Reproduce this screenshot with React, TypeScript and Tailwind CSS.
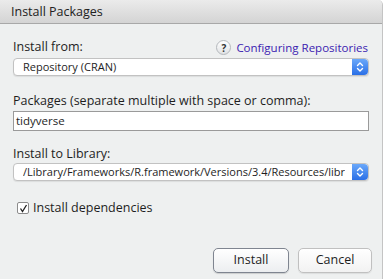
export default function App() {
  const font = { fontFamily: '"Open Sans", "DejaVu Sans", sans-serif' };

  const Stepper = () => (
    <div className="w-[16px] h-full rounded-r-[4px] bg-gradient-to-b from-[#6aa8fa] to-[#2a6fe6] flex items-center justify-center">
      <svg width="8" height="12" viewBox="0 0 8 12" fill="none" stroke="white" strokeWidth="1.4" strokeLinecap="round" strokeLinejoin="round">
        <path d="M1.5 4.5 L4 2 L6.5 4.5" />
        <path d="M1.5 7.5 L4 10 L6.5 7.5" />
      </svg>
    </div>
  );

  return (
    <div className="w-[385px] h-[279px] bg-white overflow-hidden" style={font}>
      <div className="w-[383px] h-[279px] bg-[#eef0f0] border-r border-[#c4c4c4] rounded-tr-[5px] overflow-hidden text-[12.5px] text-[#1e1e1e]">
        {/* Title bar */}
        <div className="h-[24px] bg-gradient-to-b from-[#ebebeb] to-[#d4d4d4] border-b border-[#a8a8a8] pl-[11px] pt-[4px] leading-[15px] text-[12.5px] text-[#222]">
          Install Packages
        </div>

        <div className="pl-[13px] w-[369px]">
          {/* Install from */}
          <div className="mt-[15px] h-[17px] flex items-center justify-between">
            <span>Install from:</span>
            <span className="flex items-center gap-[5px] mr-[1px]">
              <span className="w-[15px] h-[15px] rounded-full border border-[#b4b8bc] bg-gradient-to-b from-white to-[#e0e2e4] flex items-center justify-center text-[10px] font-bold text-[#333] leading-none">?</span>
              <span className="text-[#3b22b0] text-[11.5px]">Configuring Repositories</span>
            </span>
          </div>
          <div className="mt-[2px] h-[18px] flex rounded-[4px] border border-[#c2c2c2] bg-white shadow-[0_1px_1px_rgba(0,0,0,0.08)]">
            <div className="flex-1 pl-[9px] leading-[16px] text-[11px]">Repository (CRAN)</div>
            <Stepper />
          </div>

          {/* Packages */}
          <div className="mt-[16px] h-[17px] leading-[17px]">Packages (separate multiple with space or comma):</div>
          <div className="mt-[2px] h-[20px] border border-[#9a9a9a] bg-white pl-[2px] leading-[18px] text-[11.5px]">tidyverse</div>

          {/* Install to Library */}
          <div className="mt-[14px] h-[17px] leading-[17px]">Install to Library:</div>
          <div className="mt-[1px] h-[18px] flex rounded-[4px] border border-[#c2c2c2] bg-white shadow-[0_1px_1px_rgba(0,0,0,0.08)]">
            <div className="flex-1 min-w-0 ml-[9px] mr-[7px] leading-[16px] text-[11px] overflow-hidden whitespace-nowrap">/Library/Frameworks/R.framework/Versions/3.4/Resources/library</div>
            <Stepper />
          </div>

          {/* Checkbox */}
          <div className="mt-[20px] flex items-center gap-[4px] pl-[4px] h-[14px]">
            <span className="w-[12px] h-[12px] rounded-[2px] border border-[#8c8c8c] bg-white flex items-center justify-center">
              <svg width="9" height="9" viewBox="0 0 9 9" fill="none" stroke="#222" strokeWidth="1.3">
                <path d="M1.5 4.5 L3.5 7.5 L7.5 1" />
              </svg>
            </span>
            <span>Install dependencies</span>
          </div>

          {/* Buttons */}
          <div className="mt-[33px] flex justify-end gap-[9px] -mr-[3px]">
            <button className="w-[76px] h-[25px] rounded-[5px] border border-[#7f8590] bg-gradient-to-b from-white to-[#eceef0] shadow-[0_1px_1px_rgba(0,0,0,0.15)]">Install</button>
            <button className="w-[74px] h-[25px] rounded-[5px] border border-[#c0c0c0] bg-gradient-to-b from-white to-[#f2f2f2] shadow-[0_1px_1px_rgba(0,0,0,0.08)]">Cancel</button>
          </div>
        </div>
      </div>
    </div>
  );
}
